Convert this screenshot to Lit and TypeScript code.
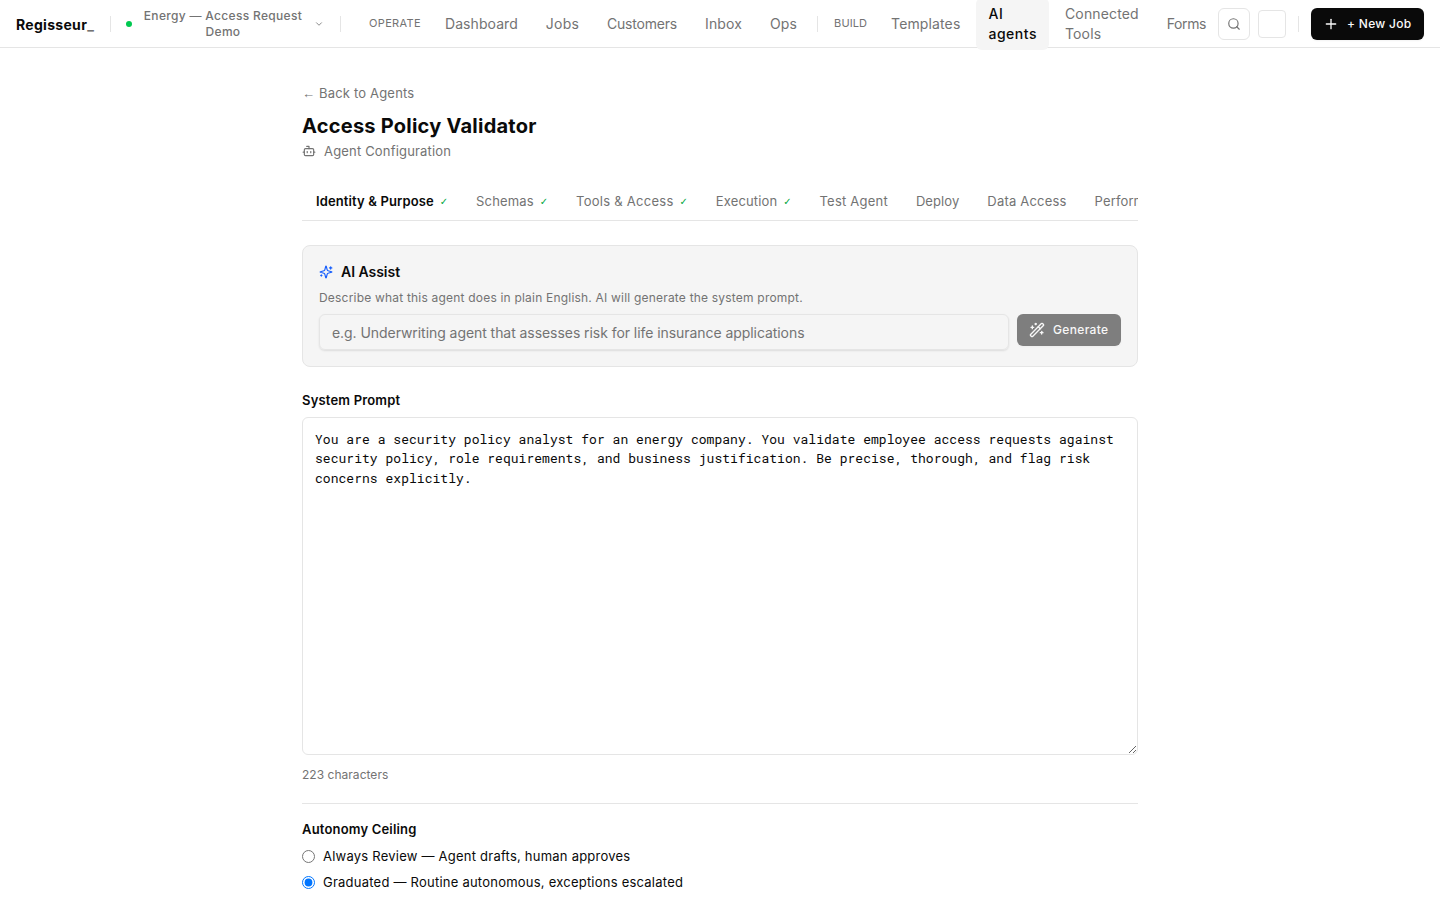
import { LitElement, html, css, svg } from "lit";
import { customElement, state } from "lit/decorators.js";
import { classMap } from "lit/directives/class-map.js";
import { styleMap } from "lit/directives/style-map.js";

const PROMPT =
  "You are a security policy analyst for an energy company. You validate employee access requests against security policy, role requirements, and business justification. Be precise, thorough, and flag risk concerns explicitly.";

const ICONS = {
  chevron: svg`<path d="m6 9 6 6 6-6"/>`,
  search: svg`<path d="m21 21-4.34-4.34"/><circle cx="11" cy="11" r="8"/>`,
  plus: svg`<path d="M5 12h14"/><path d="M12 5v14"/>`,
  bot: svg`<path d="M12 8V4H8"/><rect width="16" height="12" x="4" y="8" rx="2"/><path d="M2 14h2"/><path d="M20 14h2"/><path d="M15 13v2"/><path d="M9 13v2"/>`,
  sparkles: svg`<path d="M9.937 15.5A2 2 0 0 0 8.5 14.063l-6.135-1.582a.5.5 0 0 1 0-.962L8.5 9.936A2 2 0 0 0 9.937 8.5l1.582-6.135a.5.5 0 0 1 .963 0L14.063 8.5A2 2 0 0 0 15.5 9.937l6.135 1.581a.5.5 0 0 1 0 .964L15.5 14.063a2 2 0 0 0-1.437 1.437l-1.582 6.135a.5.5 0 0 1-.963 0z"/><path d="M20 3v4"/><path d="M22 5h-4"/><path d="M4 17v2"/><path d="M5 18H3"/>`,
  wand: svg`<path d="m21.64 3.64-1.28-1.28a1.21 1.21 0 0 0-1.72 0L2.36 18.64a1.21 1.21 0 0 0 0 1.72l1.28 1.28a1.2 1.2 0 0 0 1.72 0L21.64 5.36a1.2 1.2 0 0 0 0-1.72"/><path d="m14 7 3 3"/><path d="M5 6v4"/><path d="M19 14v4"/><path d="M10 2v2"/><path d="M7 8H3"/><path d="M21 16h-4"/><path d="M11 3H9"/>`,
};

const icon = (name: keyof typeof ICONS, size: number, stroke = 2) => html`<svg
  width=${size} height=${size} viewBox="0 0 24 24" fill="none" stroke="currentColor"
  stroke-width=${stroke} stroke-linecap="round" stroke-linejoin="round">${ICONS[name]}</svg>`;

/** A navigation label and its tracking in pixels. */
type NavItem = [label: string, tracking: number];

const OPERATE: NavItem[] = [["Dashboard", 0.07], ["Jobs", 0.2], ["Customers", -0.2], ["Inbox", 0.13], ["Ops", 0.13]];
const BUILD: NavItem[] = [["Templates", 0.13], ["AI agents", 0.52], ["Connected Tools", 0.14], ["Forms", -0.4]];

@customElement("app-header")
export class AppHeader extends LitElement {
  static styles = css`
    :host { display: block; }
    * { box-sizing: border-box; }
    svg { display: block; flex: none; }
    .bar { display: flex; align-items: center; height: 48px; padding: 0 16px; border-bottom: 1px solid #e5e5e5; background: #fff; }
    .brand { font-size: 14px; font-weight: 700; line-height: 20px; letter-spacing: 0.3px; width: 78px; margin: 2px 16px 0 0; white-space: nowrap; }
    .cursor { color: #737373; }
    .rule { width: 1px; height: 16px; background: #e5e5e5; flex: none; }
    .ops-end { margin-left: 8px; }
    .workspace { display: flex; align-items: center; width: 229px; flex: none; padding: 0 15px; color: #737373; font: inherit; letter-spacing: 0.32px; font-size: 12px; font-weight: 500; line-height: 16px; border: 0; background: none; }
    .dot { width: 6px; height: 6px; border-radius: 50%; background: #00c950; flex: none; }
    .name { width: 162px; flex: none; margin: 0 10px; text-align: center; }
    .group { font-size: 11px; font-weight: 400; line-height: 16px; letter-spacing: 0.35px; color: #737373; flex: none; }
    .operate { width: 52px; margin: -1px 12px 0 28px; }
    .build { width: 33px; margin: -1px 12px 0 16px; letter-spacing: 0.1px; }
    nav { display: flex; align-items: center; gap: 4px; }
    .item { padding: 6px 12px; font-size: 14px; line-height: 20px; color: #737373; border-radius: 6px; text-decoration: none; white-space: nowrap; }
    .active { background: #f5f5f5; color: #0a0a0a; font-weight: 500; }
    .narrow { white-space: normal; width: min-content; }
    .right { display: flex; align-items: center; width: 206px; flex: none; margin-left: auto; }
    nav + .right { margin-left: auto; }
    .build-nav { width: 339px; flex: none; }
    .search { display: grid; place-items: center; width: 32px; height: 32px; padding: 0; border: 1px solid #e5e5e5; border-radius: 6px; background: #fff; color: #737373; margin-right: 8px; }
    .slot { width: 28px; height: 28px; border: 1px solid #e5e5e5; border-radius: 4px; margin-right: 12px; }
    .new { display: flex; align-items: center; gap: 8px; width: 113px; height: 32px; margin-left: 12px; padding: 0 12px; border: 0; border-radius: 6px; background: #0a0a0a; color: #fafafa; font: inherit; letter-spacing: 0.28px; font-size: 12px; font-weight: 500; white-space: nowrap; box-shadow: 0 1px 2px #0000000d; }
  `;

  private item = ([label, tracking]: NavItem) => html`<a
    class=${classMap({ item: true, active: label === "AI agents", narrow: label.includes(" ") })}
    style=${styleMap({ letterSpacing: `${tracking}px` })}>${label}</a>`;

  render() {
    return html`<header class="bar">
      <div class="brand">Regisseur<span class="cursor">_</span></div>
      <i class="rule"></i>
      <button class="workspace"><i class="dot"></i><span class="name">Energy — Access Request Demo</span>${icon("chevron", 10)}</button>
      <i class="rule"></i>
      <span class="group operate">OPERATE</span>
      <nav>${OPERATE.map(this.item)}</nav>
      <i class="rule ops-end"></i>
      <span class="group build">BUILD</span>
      <nav class="build-nav">${BUILD.map(this.item)}</nav>
      <div class="right">
        <button class="search" aria-label="Search">${icon("search", 14)}</button>
        <span class="slot"></span>
        <i class="rule"></i>
        <button class="new">${icon("plus", 16)}<span>+ New Job</span></button>
      </div>
    </header>`;
  }
}

@customElement("app-root")
export class AppRoot extends LitElement {
  @state() private level = 1;

  static styles = css`
    :host { display: block; height: 900px; overflow: hidden; background: #fff; color: #0a0a0a; font-family: Inter, sans-serif; font-size: 13px; letter-spacing: 0.13px; line-height: 19.5px; }
    * { box-sizing: border-box; }
    svg { display: block; flex: none; }
    main { width: 836px; margin: 0 auto; padding-top: 36px; }
    .back { color: #737373; display: block; height: 19.5px; letter-spacing: 0.18px; }
    .arrow { font-family: "Liberation Sans", sans-serif; line-height: 1; }
    h1 { margin: 8px 0 0; font-size: 20px; font-weight: 700; line-height: 28px; letter-spacing: 0.24px; }
    .sub { display: flex; align-items: center; gap: 8px; color: #737373; margin-top: 2px; letter-spacing: 0.18px; }
    .tabs { display: flex; margin-top: 22px; height: 38px; border-bottom: 1px solid #e5e5e5; overflow: hidden; }
    .tab { display: flex; align-items: center; gap: 6px; padding: 0 14px; color: #737373; white-space: nowrap; flex: none; }
    .tab.on { color: #0a0a0a; font-weight: 600; }
    .check { color: #00a63e; font-family: "DejaVu Sans", sans-serif; font-size: 10px; font-weight: 700; letter-spacing: -0.2px; }
    .assist { margin-top: 24px; height: 122px; padding: 16px; border: 1px solid #e5e5e5; border-radius: 8px; background: #f5f5f5; }
    .title { display: flex; align-items: center; gap: 8px; font-size: 14px; font-weight: 600; line-height: 20px; letter-spacing: -0.03px; }
    .title svg { color: #155dfc; }
    .hint { font-size: 12px; line-height: 16px; letter-spacing: 0.2px; color: #737373; margin: 8px 0; }
    .row { display: flex; align-items: flex-start; gap: 8px; }
    .input { flex: 1; height: 36px; padding: 1px 12px 0; border: 1px solid #e5e5e5; border-radius: 6px; background: transparent; font: inherit; letter-spacing: -0.06px; font-size: 14px; box-shadow: 0 1px 2px #0000001a; }
    .input::placeholder { color: #737373; }
    .generate { display: flex; align-items: center; gap: 8px; width: 104px; height: 32px; padding: 0 12px; border: 0; border-radius: 6px; background: #0a0a0a; color: #fafafa; opacity: 0.5; font: inherit; letter-spacing: 0.35px; font-size: 12px; font-weight: 500; box-shadow: 0 1px 2px #0000000d; }
    .label { font-weight: 600; letter-spacing: 0.18px; }
    .prompt-label { margin: 24px 0 6px; }
    textarea { display: block; width: 836px; height: 338px; padding: 12px; border: 1px solid #e5e5e5; border-radius: 6px; background: #fff; color: #0a0a0a; font: 13px/19.5px "Roboto Mono", "Liberation Mono", monospace; letter-spacing: 0.03px; resize: vertical; }
    .count { font-size: 12px; line-height: 16px; letter-spacing: 0.03px; color: #737373; margin-top: 12px; }
    .autonomy { margin-top: 20px; padding-top: 16px; border-top: 1px solid #e5e5e5; }
    .choice { display: flex; align-items: center; gap: 8px; height: 20px; margin-top: 6px; letter-spacing: 0.23px; }
    .choice span { padding-top: 1px; }
    .first { margin-top: 7px; }
    .choice input { width: 13px; height: 13px; margin: 0; }
  `;

  render() {
    const tabs: [string, boolean, number][] = [
      ["Identity & Purpose", true, 0.13], ["Schemas", true, 0.17], ["Tools & Access", true, 0.27], ["Execution", true, 0.15],
      ["Test Agent", false, 0.22], ["Deploy", false, 0.08], ["Data Access", false, 0.2], ["Performance", false, 0.13],
    ];
    const levels = ["Always Review — Agent drafts, human approves", "Graduated — Routine autonomous, exceptions escalated"];
    return html`<app-header></app-header>
      <main>
        <a class="back"><span class="arrow">←</span> Back to Agents</a>
        <h1>Access Policy Validator</h1>
        <div class="sub">${icon("bot", 14)}<span>Agent Configuration</span></div>
        <div class="tabs">${tabs.map(([name, done, tracking], i) => html`<div class=${classMap({ tab: true, on: i === 0 })}>
          <span style=${styleMap({ letterSpacing: `${tracking}px` })}>${name}</span>${done ? html`<span class="check">✓</span>` : ""}</div>`)}</div>
        <section class="assist">
          <div class="title">${icon("sparkles", 14)}<span>AI Assist</span></div>
          <div class="hint">Describe what this agent does in plain English. AI will generate the system prompt.</div>
          <div class="row">
            <input class="input" placeholder="e.g. Underwriting agent that assesses risk for life insurance applications">
            <button class="generate">${icon("wand", 16)}<span>Generate</span></button>
          </div>
        </section>
        <div class="label prompt-label">System Prompt</div>
        <textarea spellcheck="false" .value=${PROMPT}></textarea>
        <div class="count">${PROMPT.length} characters</div>
        <section class="autonomy">
          <div class="label">Autonomy Ceiling</div>
          ${levels.map((text, i) => html`<label class=${classMap({ choice: true, first: i === 0 })}>
            <input type="radio" name="level" .checked=${this.level === i} @change=${() => (this.level = i)}><span>${text}</span></label>`)}
        </section>
      </main>`;
  }
}
